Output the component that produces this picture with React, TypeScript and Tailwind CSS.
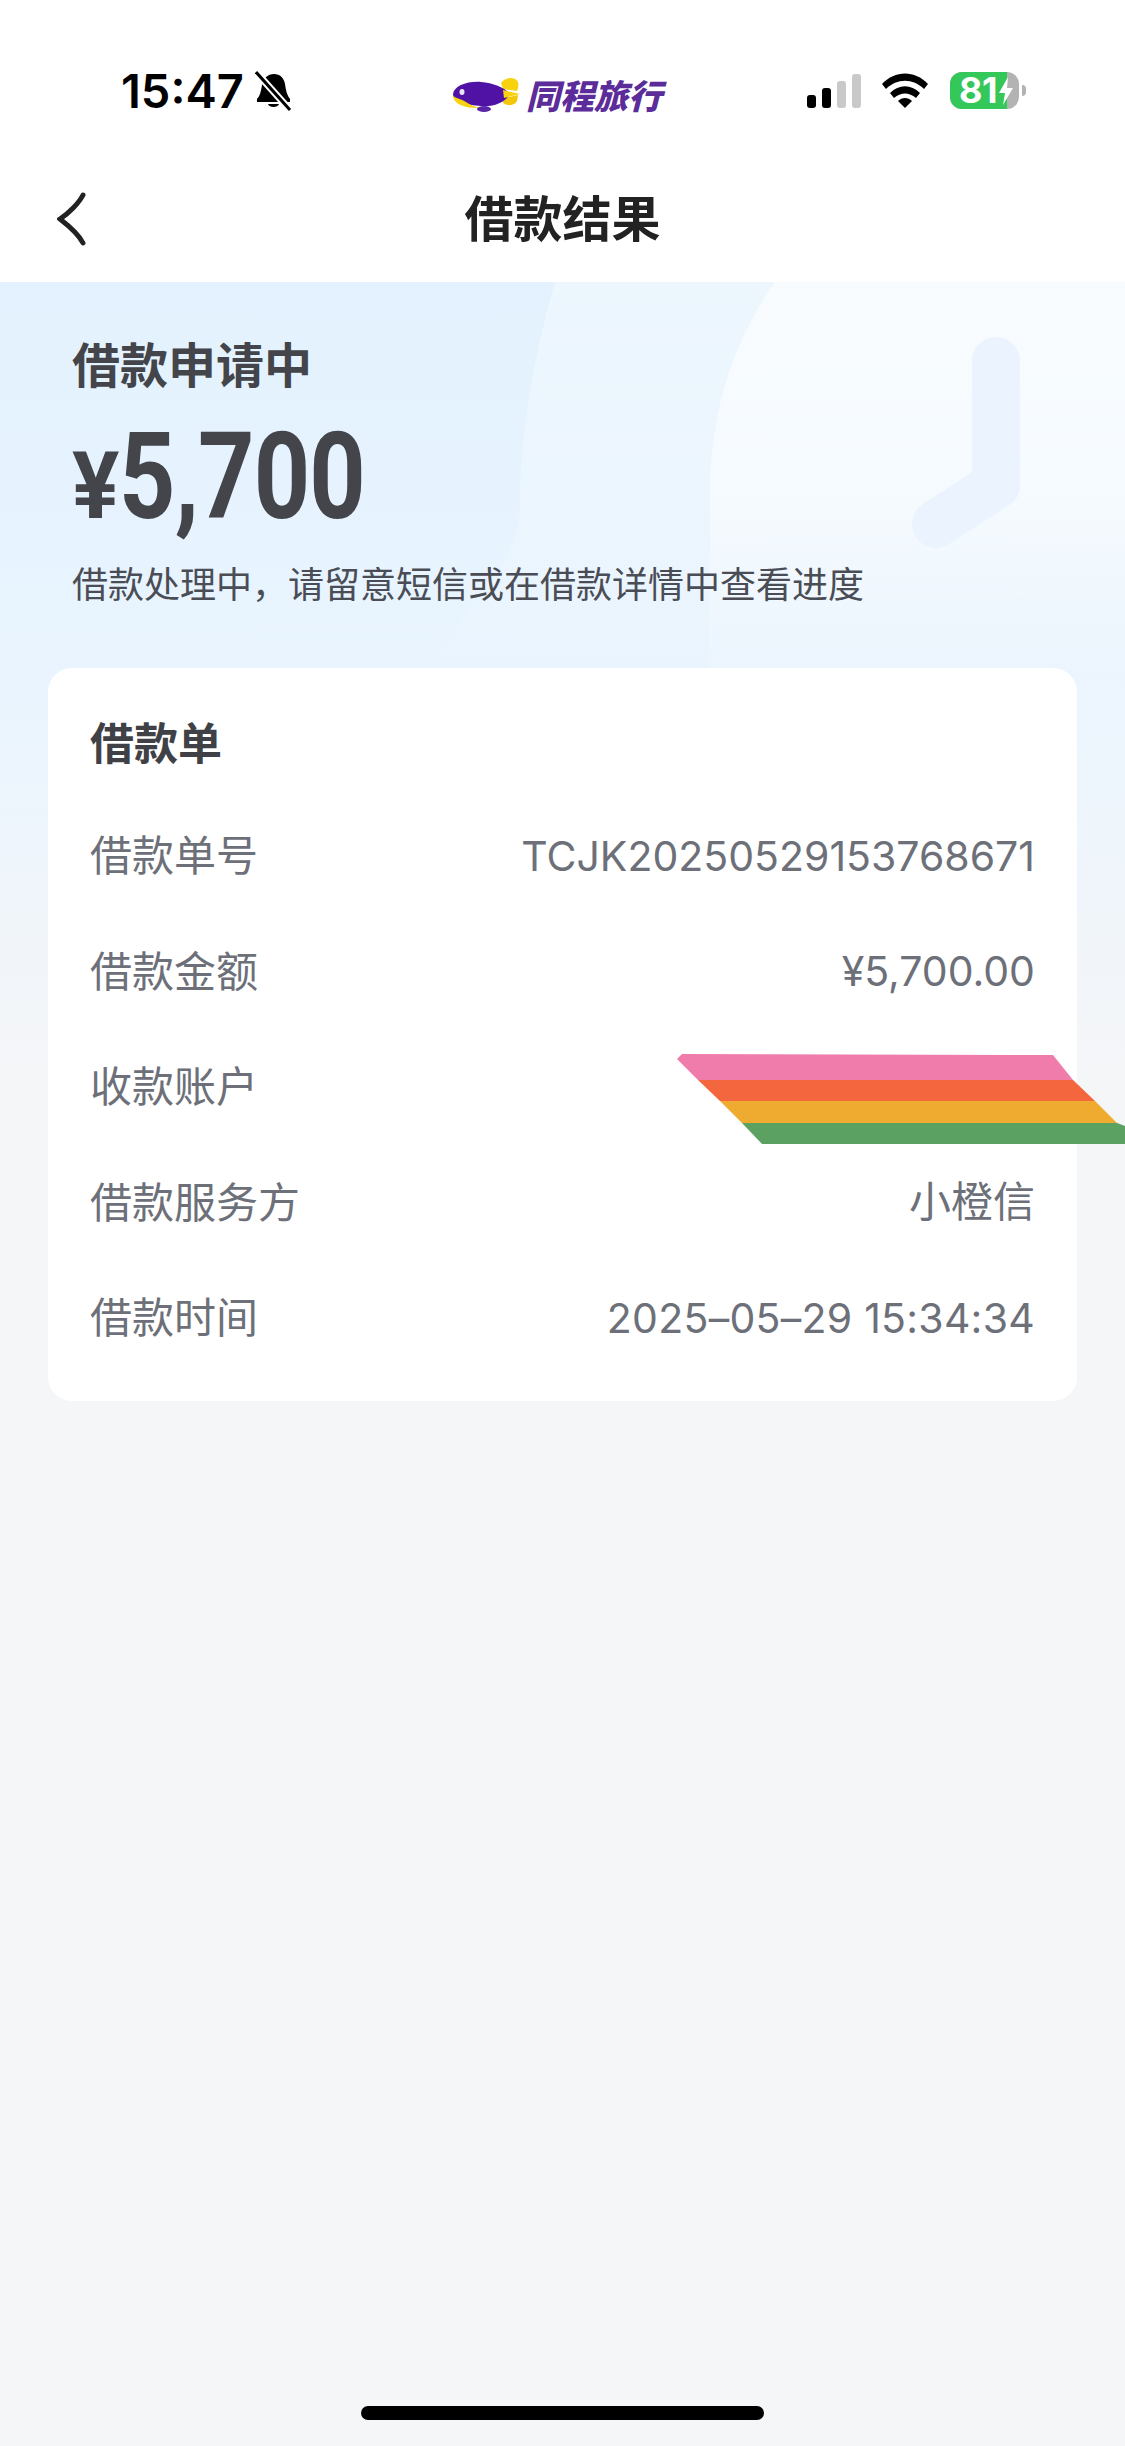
const rows = [
  { label: "借款单号", value: "TCJK20250529153768671", valueClass: "text-[41px]" },
  { label: "借款金额", value: "¥5,700.00", valueClass: "text-[41px]" },
  { label: "收款账户", value: "", valueClass: "text-[41px]" },
  { label: "借款服务方", value: "小橙信", valueClass: "text-[42px]" },
  { label: "借款时间", value: "2025–05–29 15:34:34", valueClass: "text-[41px] tracking-[0.25px]" },
];

const Airship = () => (
  <svg width="68" height="36" viewBox="0 0 68 36">
    <path d="M48 6C52 0 62-1 65 5c1 3 0 6-1 9L50 12z" fill="#f8d10f" />
    <path d="M50 26c6 4 12 2 14-2l1-6-14 3z" fill="#f3c80c" />
    <path d="M0 17C1 9 14 4 28 5c12 1 23 5 29 12-5 9-17 13-29 12C14 28 0 25 0 17z" fill="#4f12a5" />
    <path d="M0 19c4 3 9 3 13 6 4 3 9 5 14 6-9 0-19-1-24-6-2-2-3-4-3-6z" fill="#f8d10f" />
    <path d="M50 13l17 4-16 4z" fill="#f8d10f" />
    <ellipse cx="9" cy="15" rx="2.5" ry="3" fill="#e7e3f4" />
    <ellipse cx="31" cy="32" rx="7" ry="3" fill="#5b25a8" />
  </svg>
);

const StatusBar = () => (
  <div className="h-[160px] bg-white pl-[121px] flex items-start pt-[72px]">
    <span className="w-[134px] text-[47px] leading-[38px] font-semibold text-black font-['Inter',sans-serif]">
      15:47
    </span>
    <svg width="37" height="40" viewBox="0 0 37 40" className="-mt-[1px]">
      <path d="M19 3c6 0 10 4 11 10 1 7 2 11 5 15v3H2v-3c3-3 4-8 5-14 1-7 6-11 12-11z" fill="#000" />
      <path d="M13 33h11c-1 4-10 4-11 0z" fill="#000" />
      <path d="M1 1l34 38" stroke="#fff" strokeWidth="7" />
      <path d="M1 1l34 38" stroke="#000" strokeWidth="3" />
    </svg>
    <div className="ml-[161px] w-[68px] mt-[5px]">
      <Airship />
    </div>
    <span className="ml-[5px] -mt-[2px] shrink-0 whitespace-nowrap pr-[5px] text-[34px] leading-[50px] font-black italic text-[#5b2c9a] font-['Noto_Sans_CJK_SC',sans-serif]">
      同程旅行
    </span>
    <div className="ml-[140px] flex items-end gap-[6px] h-[36px]">
      <div className="w-[9px] h-[13px] rounded-[3px] bg-black" />
      <div className="w-[9px] h-[20px] rounded-[3px] bg-black" />
      <div className="w-[9px] h-[27px] rounded-[3px] bg-[#c9c9c9]" />
      <div className="w-[9px] h-[34px] rounded-[3px] bg-[#c9c9c9]" />
    </div>
    <svg width="46" height="35" viewBox="0 0 46 35" className="ml-[21px] mt-[1px]">
      <path d="M0 11C13-3 33-3 46 11l-4 5C31 5 15 5 4 16z" fill="#000" />
      <path d="M8 20c9-9 21-9 30 0l-4 5c-7-6-15-6-22 0z" fill="#000" />
      <path d="M16 28c4-4 10-4 14 0l-7 7z" fill="#000" />
    </svg>
    <div className="ml-[22px] relative w-[69px] h-[37px] rounded-[12px] bg-[#b3b3b3] overflow-hidden">
      <div className="w-[57px] h-full bg-[#34c759] pl-[9px] text-[36px] leading-[37px] font-bold text-white font-['Inter',sans-serif] tracking-[-0.01em]">
        81
      </div>
      <svg width="14" height="28" viewBox="0 0 14 28" className="absolute left-[49px] top-[5px]">
        <path d="M9 0L0 16h6l-2 12 10-17H8z" fill="#fff" />
      </svg>
    </div>
    <div className="ml-[3px] mt-[13px] w-[4px] h-[11px] rounded-r-full bg-[#b3b3b3]" />
  </div>
);

const NavBar = () => (
  <div className="relative h-[122px] bg-white flex items-center justify-center">
    <svg width="30" height="54" viewBox="0 0 30 54" className="absolute left-[57px] top-[32px]">
      <path d="M26 3C22 11 12 21 3 27c9 7 19 16 23 24" fill="none" stroke="#222" strokeWidth="5" strokeLinecap="round" />
    </svg>
    <span className="text-[49px] leading-[60px] font-semibold text-[#222] -mt-[11px]">借款结果</span>
  </div>
);

const HeroBackground = () => (
  <svg className="absolute left-0 top-0" width="1125" height="700" viewBox="0 0 1125 700">
    <defs>
      <linearGradient id="fadeA" x1="0" y1="0" x2="0" y2="1">
        <stop offset="0" stopColor="#ffffff" stopOpacity="0.36" />
        <stop offset="0.3" stopColor="#ffffff" stopOpacity="0.24" />
        <stop offset="0.55" stopColor="#ffffff" stopOpacity="0.03" />
        <stop offset="1" stopColor="#ffffff" stopOpacity="0" />
      </linearGradient>
      <linearGradient id="fadeB" x1="0" y1="0" x2="0" y2="1">
        <stop offset="0" stopColor="#ffffff" stopOpacity="0.64" />
        <stop offset="0.3" stopColor="#ffffff" stopOpacity="0.5" />
        <stop offset="0.55" stopColor="#ffffff" stopOpacity="0.12" />
        <stop offset="1" stopColor="#ffffff" stopOpacity="0" />
      </linearGradient>
    </defs>
    <path d="M555 0C535 70 520 150 520 225c0 60-60 100-100 175v300h705V0z" fill="url(#fadeA)" />
    <path d="M775 0C725 70 708 150 710 225c0 70 0 200-10 475h425V0z" fill="url(#fadeB)" />
    <path d="M996 79v124l-60 39" fill="none" stroke="#eaf3fe" strokeWidth="48" strokeLinecap="round" strokeLinejoin="round" />
  </svg>
);

const App = () => {
  return (
    <div className="relative flex flex-col h-[2446px] overflow-hidden bg-[#f5f6f8] font-['Noto_Sans_CJK_SC',sans-serif]">
      <StatusBar />
      <NavBar />
      <div className="relative flex-1 flex flex-col bg-[linear-gradient(180deg,#e3f2fe_0px,#e9f4fe_400px,#f5f6f8_800px)]">
        <HeroBackground />
        <div className="relative flex flex-col">
          <div className="pl-[72px] pt-[50px] flex flex-col">
            <span className="text-[48px] leading-[60px] font-semibold text-[#43454b]">借款申请中</span>
            <div className="mt-[25px] h-[120px] flex items-baseline font-bold text-[#43454b] font-['Roboto',sans-serif]">
              <span className="inline-block w-[47px] text-[93px] leading-[120px] scale-x-[0.95] origin-left">¥</span>
              <span className="inline-block text-[120px] leading-[120px] scale-x-[0.82] origin-left tracking-[-1px]">5,700</span>
            </div>
            <span className="mt-[20px] text-[36px] leading-[50px] text-[#4a4d55]">
              借款处理中，请留意短信或在借款详情中查看进度
            </span>
          </div>
          <div className="relative mt-[61px] mx-[48px] pt-[43px] pb-[23px] rounded-[24px] bg-white">
            <div className="px-[42px] text-[44px] leading-[60px] font-bold text-[#3f4146] mb-[29px]">借款单</div>
            {rows.map((row) => (
              <div key={row.label} className="flex items-center justify-between h-[115.5px] px-[42px]">
                <span className="text-[42px] leading-[56px] text-[#6d7079] pb-[9px]">{row.label}</span>
                <span className={`leading-[56px] text-[#6d7079] pb-[4px] font-['Inter','Noto_Sans_CJK_SC',sans-serif] ${row.valueClass}`}>{row.value}</span>
              </div>
            ))}
          </div>
        </div>
        <svg className="absolute left-[677px] top-[772px]" width="448" height="92" viewBox="677 1054 448 92">
          <path d="M677 1059l5-5 371 1 20 25H698z" fill="#f07cab" />
          <path d="M698 1080h375l22 21H720z" fill="#f4663e" />
          <path d="M720 1101h375l22 22H742z" fill="#efab2f" />
          <path d="M742 1123h375l8 3v18H762z" fill="#5ba161" />
        </svg>
      </div>
      <div className="absolute left-[361px] top-[2406px] w-[403px] h-[14px] rounded-full bg-black" />
    </div>
  );
};

export default App;
